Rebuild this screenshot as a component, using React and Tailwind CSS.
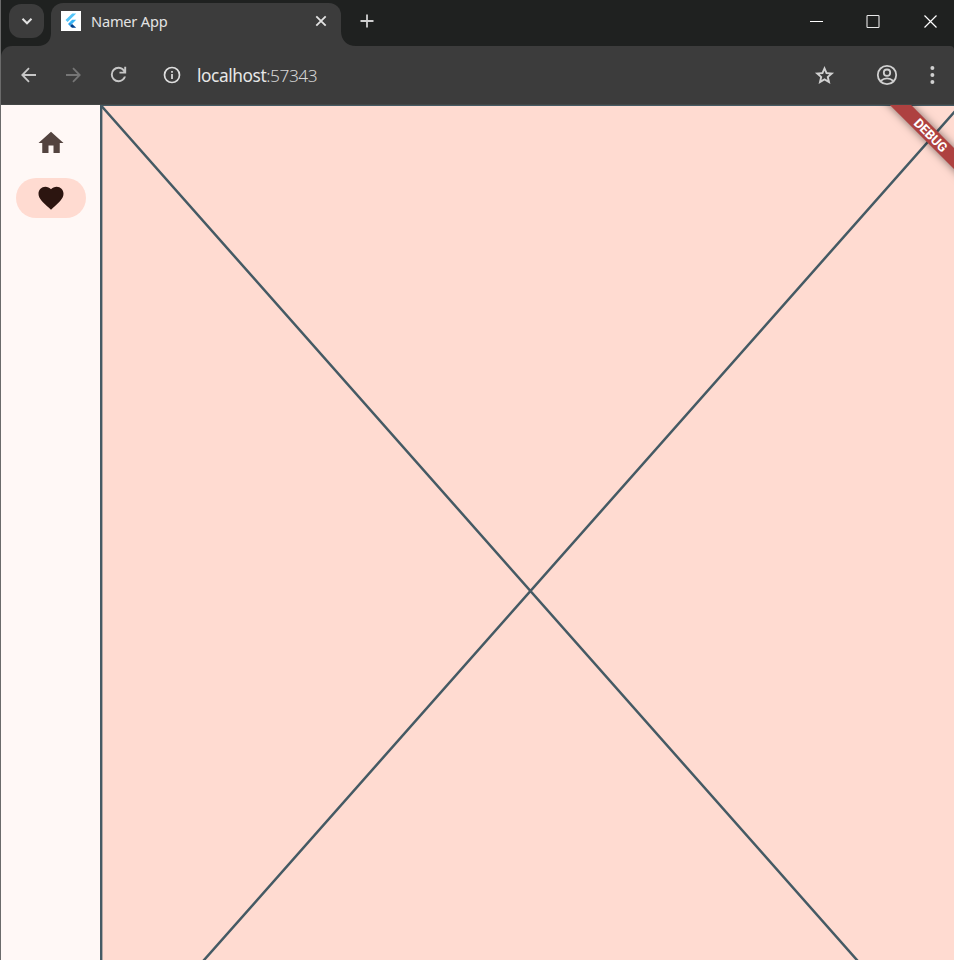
import React from 'react';

function FlutterIcon() {
  return (
    <svg className="h-5 w-5 shrink-0" viewBox="0 0 20 20">
      <rect width="20" height="20" fill="#fff" />
      <path d="M11.200 2.500H15.200L6.600 11L4.500 9Z" fill="#54c5f8" />
      <path d="M11.200 8.800H15.200L11 13L8.800 11Z" fill="#35b4f5" />
      <path d="M7 12.900L9 11L11.200 12.900L9 15Z" fill="#29a0ee" />
      <path d="M9 15L11.100 12.900L15.200 16.800H11Z" fill="#013f8b" />
    </svg>
  );
}

function TabStrip() {
  return (
    <div className="flex h-[46px] shrink-0 bg-[#1f2120]">
      <div className="relative flex w-[50px] shrink-0 pt-1 pl-2">
        <div className="flex h-[34px] w-[35px] items-center justify-center rounded-[12px] bg-[#3c3c3c]">
          <svg width="12" height="12" viewBox="0 0 12 12" fill="none" stroke="#e3e3e3" strokeWidth="2">
            <path d="M1.5 3.8L6 8.3L10.5 3.8" />
          </svg>
        </div>
        <svg className="absolute right-0 bottom-0" width="13" height="13" viewBox="0 0 13 13" fill="#3c3c3c">
          <path d="M13 0V13H0C8 13 13 8 13 0Z" />
        </svg>
      </div>
      <div className="mt-[3px] flex w-[290px] shrink-0 items-center rounded-t-[12px] bg-[#3c3c3c] pr-[14px] pb-[7px] pl-[10px]">
        <FlutterIcon />
        <span className="ml-[10px] whitespace-nowrap text-[14.6px] leading-5 tracking-[-0.2px] text-[#e3e3e3]">Namer App</span>
        <svg className="ml-auto" width="12" height="12" viewBox="0 0 12 12" stroke="#e3e3e3" strokeWidth="1.8">
          <path d="M1.3 1.3L10.7 10.7M10.7 1.3L1.3 10.7" />
        </svg>
      </div>
      <div className="relative flex w-[60px] shrink-0 pt-[14px] pl-[19px]">
        <svg width="14" height="14" viewBox="0 0 14 14" stroke="#d0d0d0" strokeWidth="1.8">
          <path d="M7 .5V13.5M.5 7H13.5" />
        </svg>
        <svg className="absolute bottom-0 left-0" width="15" height="15" viewBox="0 0 15 15" fill="#3c3c3c">
          <path d="M0 0V15H15C6 15 0 9 0 0Z" />
        </svg>
      </div>
      <div className="mr-[17px] ml-auto flex gap-[43px] pt-[14px]">
        <svg width="14" height="15" viewBox="0 0 14 15" stroke="#fff" strokeWidth="1"><path d="M1 7.5H14" /></svg>
        <svg width="14" height="15" viewBox="0 0 14 15" fill="none" stroke="#e8e8e8" strokeWidth="1.1"><rect x="1" y="1.5" width="12" height="12" rx=".8" /></svg>
        <svg width="14" height="15" viewBox="0 0 14 15" stroke="#fff" strokeWidth="1.2"><path d="M1.500 1.500L13.500 13.500M13.500 1.500L1.500 13.500" /></svg>
      </div>
    </div>
  );
}

function Toolbar() {
  return (
    <div className="flex h-[59px] shrink-0 bg-[#1f2120]">
      <div className="flex w-full items-center rounded-tl-[11px] rounded-tr-[4px] border-b border-[#444746] bg-[#3c3c3c] pb-px pl-[18px]">
        <svg width="20" height="20" viewBox="0 0 20 20" fill="none" stroke="#c7c7c7" strokeWidth="1.8">
          <path d="M17 10H3.5M10 3.2L3.3 10L10 16.8" />
        </svg>
        <svg className="ml-[25px]" width="20" height="20" viewBox="0 0 20 20" fill="none" stroke="#757575" strokeWidth="1.8">
          <path d="M2 10H15.5M9 3.2L15.7 10L9 16.8" />
        </svg>
        <svg className="ml-[23px]" width="23" height="23" viewBox="0 -960 960 960" fill="#c7c7c7">
          <path d="M480-160q-134 0-227-93t-93-227q0-134 93-227t227-93q69 0 132 28.500T720-690v-110h80v280H520v-80h168q-32-56-87.500-88T480-720q-100 0-170 70t-70 170q0 100 70 170t170 70q77 0 139-44t87-116h84q-28 106-114 173t-196 67Z" />
        </svg>
        <svg className="ml-[33px]" width="18" height="18" viewBox="0 0 18 18" fill="none" stroke="#dedede" strokeWidth="1.7">
          <circle cx="9" cy="9" r="7.5" />
          <path d="M9 8V13M9 5V6.800" />
        </svg>
        <div className="ml-[16px] pt-[3px] text-[17.3px] leading-6 font-light tracking-[-0.42px] whitespace-nowrap text-[#d6d6d6]">
          <span className="font-normal text-[#e8e8e8]">localhost</span>:57343
        </div>
        <svg className="ml-auto" width="23" height="23" viewBox="0 -960 960 960" fill="#d0d0d0">
          <path d="m354-247 126-76 126 77-33-144 111-96-146-13-58-136-58 135-146 13 111 97-33 143ZM233-80l65-281L80-550l288-25 112-265 112 265 288 25-218 189 65 281-247-149L233-80Z" />
        </svg>
        <svg className="ml-[40px]" width="22" height="22" viewBox="0 0 22 22" fill="none" stroke="#d0d0d0" strokeWidth="1.8">
          <circle cx="11" cy="11" r="9.200" />
          <circle cx="11" cy="8.700" r="3.200" />
          <path d="M4.500 17C8.500 13.700 13.500 13.700 17.500 17" />
        </svg>
        <svg className="mr-[12px] ml-[24px]" width="20" height="20" viewBox="0 0 20 20" fill="#d0d0d0">
          <circle cx="10.400" cy="3" r="2" />
          <circle cx="10.400" cy="10" r="2" />
          <circle cx="10.400" cy="17" r="2" />
        </svg>
      </div>
    </div>
  );
}

function NavigationRail() {
  return (
    <nav className="flex w-[99px] shrink-0 flex-col items-center bg-[#fff8f6] pt-[18px]">
      <div className="flex h-10 w-[70px] items-center justify-center">
        <svg width="30" height="30" viewBox="0 0 24 24" fill="#53433f"><path d="M10 20v-6h4v6h5v-8h3L12 3 2 12h3v8z" /></svg>
      </div>
      <div className="mt-[14.500px] flex h-10 w-[70px] items-center justify-center rounded-full bg-[#ffdbd1]">
        <svg width="30" height="30" viewBox="0 0 24 24" fill="#2c1510"><path d="M12 21.350l-1.450-1.320C5.400 15.360 2 12.280 2 8.500 2 5.420 4.420 3 7.500 3c1.740 0 3.410.810 4.500 2.090C13.090 3.810 14.760 3 16.500 3 19.580 3 22 5.420 22 8.500c0 3.780-3.400 6.860-8.550 11.540L12 21.350z" /></svg>
      </div>
    </nav>
  );
}

function Placeholder() {
  return (
    <main className="relative min-w-0 flex-1 overflow-hidden bg-[#ffdbd1]">
      <svg className="block" width="854" height="855" viewBox="0 0 854 855" fill="none" stroke="#455a64">
        <path d="M1 .500H854" strokeWidth="1" />
        <path d="M1.200 0V855" strokeWidth="2.400" />
        <path d="M1 .500L860 971.500M860 .500L1 971.500" strokeWidth="2.500" />
      </svg>
      <div className="absolute top-[21.500px] left-[769.500px] flex h-[15px] w-[120px] rotate-45 items-center justify-center bg-[#ae4140] font-[Roboto] text-[13px] leading-none font-bold text-white shadow-[0_0_8px_rgba(0,0,0,0.5)]">
        <span className="pl-[2px] tracking-[-0.1px]">DEBUG</span>
      </div>
    </main>
  );
}

export default function App() {
  return (
    <div className="flex h-screen w-full flex-col overflow-hidden border-l border-[#6b6b6b] font-['Noto_Sans',sans-serif]">
      <TabStrip />
      <Toolbar />
      <div className="flex min-h-0 flex-1">
        <NavigationRail />
        <Placeholder />
      </div>
    </div>
  );
}
